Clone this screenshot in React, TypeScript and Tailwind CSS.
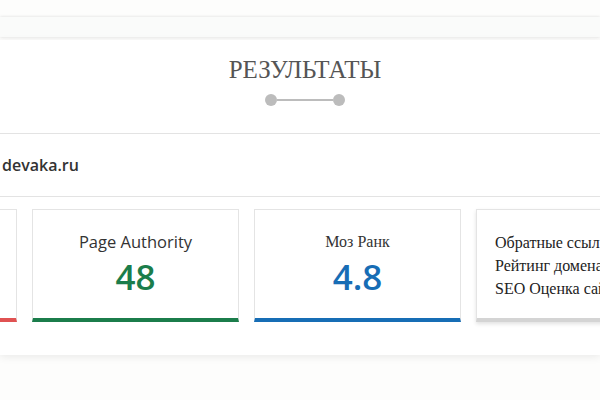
import React from "react";

type Stat = { label: string; value: string; color: string; bar: string; serif?: boolean };

const stats: Stat[] = [
  { label: "Domain Authority", value: "53", color: "text-[#d9534f]", bar: "border-b-[#e05252]" },
  { label: "Page Authority", value: "48", color: "text-[#1b7d4b]", bar: "border-b-[#1b7d4b]" },
  { label: "Моз Ранк", value: "4.8", color: "text-[#176db5]", bar: "border-b-[#176db5]", serif: true },
];

const extra = ["Обратные ссылки", "Рейтинг домена", "SEO Оценка сайта"];

function StatCard({ s }: { s: Stat }) {
  return (
    <div
      className={`flex h-[113px] w-[207px] shrink-0 flex-col items-center border border-[#e4e4e4] border-b-4 bg-white pt-[22px] ${s.bar}`}
    >
      <div
        className={`leading-[20px] text-[#333] ${
          s.serif
            ? "font-['Liberation_Serif',serif] text-[16px]"
            : "font-['Open_Sans',sans-serif] text-[16.5px] font-medium"
        }`}
      >
        {s.label}
      </div>
      <div className={`mt-[5px] font-['Open_Sans',sans-serif] text-[35px] font-semibold leading-[40px] ${s.color}`}>
        {s.value}
      </div>
    </div>
  );
}

export default function App() {
  return (
    <div className="h-[400px] w-[600px] overflow-hidden bg-[#fdfdfc]">
      {/* tail of the previous block */}
      <div className="mt-[17px] h-[20px] bg-[#fafbfa] shadow-[0_0_3px_rgba(0,0,0,0.14)]" />

      <div className="mt-[3px] bg-white shadow-[0_2px_8px_rgba(0,0,0,0.08)]">
        <div className="ml-[-190px] w-[990px]">
          <div className="flex flex-col items-center border-b border-[#e3e3e3] pb-[27px] pt-[15px]">
            <h2 className="font-['Liberation_Serif',serif] text-[25px] leading-[30px] text-[#555]">РЕЗУЛЬТАТЫ</h2>
            <div className="mt-[9px] flex items-center">
              <span className="h-[12px] w-[12px] rounded-full bg-[#bcbcbc]" />
              <span className="h-[2px] w-[56px] bg-[#bcbcbc]" />
              <span className="h-[12px] w-[12px] rounded-full bg-[#bcbcbc]" />
            </div>
          </div>

          <div className="flex h-[63px] items-center border-b border-[#e3e3e3] pl-[192px] font-['Open_Sans',sans-serif] text-[16px] font-semibold text-[#333]">
            devaka.ru
          </div>

          <div className="flex gap-[15px] pb-[33px] pt-[12px]">
            {stats.map((s) => (
              <StatCard key={s.label} s={s} />
            ))}
            <div className="h-[113px] w-[207px] shrink-0 border border-[#e4e4e4] border-b-4 border-b-[#d4d4d4] bg-white pl-[18px] pt-[21px] shadow-[0_2px_4px_rgba(0,0,0,0.12)]">
              {extra.map((t) => (
                <div key={t} className="whitespace-nowrap font-['Liberation_Serif',serif] text-[16px] leading-[23px] text-[#222]">
                  {t}
                </div>
              ))}
            </div>
          </div>
        </div>
      </div>
    </div>
  );
}
